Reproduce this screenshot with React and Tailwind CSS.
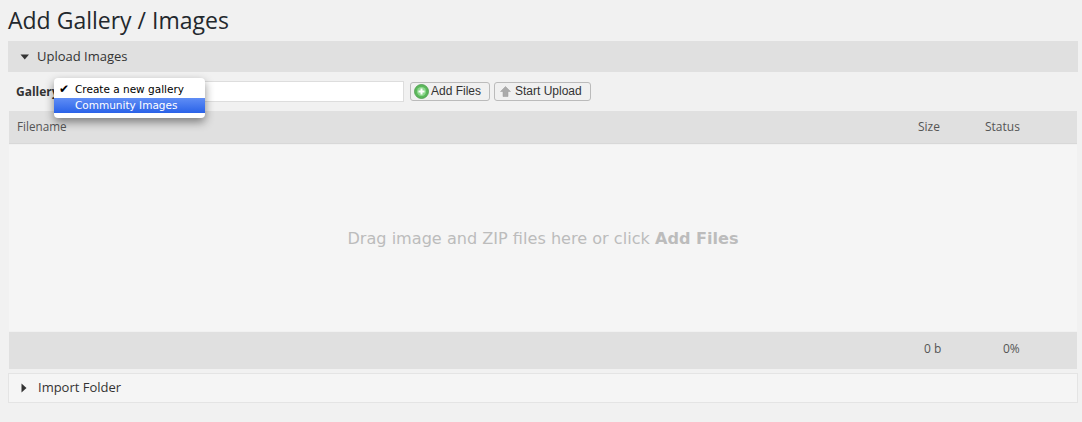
import React from "react";

const sans = "font-['Open_Sans',sans-serif]";
const lucida = "font-['DejaVu_Sans',sans-serif]";

const App = () => {
  return (
    <div className={`min-h-screen bg-[#f1f1f1] pl-2 pr-1 text-[#32373c] ${sans}`}>
      <h1 className="h-[41px] pt-[5px] text-[23px] leading-[31px] text-[#23282d]">
        Add Gallery / Images
      </h1>

      {/* UPLOAD PANEL */}
      <div className="flex h-[31px] items-center bg-[#e0e0e0] pl-3">
        <svg width="10" height="6" viewBox="0 0 10 6" className="mr-[7px]">
          <path d="M0.5 0.5h8.5L4.75 5.5z" fill="#333" />
        </svg>
        <span className="text-[13px] text-[#333]">Upload Images</span>
      </div>

      <div className="relative flex h-[39px] items-center pl-2">
        <span className="w-[46px] overflow-hidden whitespace-nowrap text-[12px] font-bold text-[#333]">
          Gallery
        </span>
        <input
          readOnly
          className="ml-[30px] h-[21px] w-[312px] border border-[#ddd] bg-white"
        />
        <button className="ml-[6px] flex h-[19px] w-[80px] items-center rounded-[3px] border border-[#bbb] bg-[#f0f0f0] pb-px pl-[3px] font-['Liberation_Sans',sans-serif] text-[12px] text-[#333]">
          <svg width="15" height="15" viewBox="0 0 15 15" className="mr-[2px] mt-px">
            <circle cx="7.5" cy="7.5" r="7" fill="#5cb85c" stroke="#4a9a4a" strokeWidth="0.8" />
            <circle cx="7.5" cy="7.5" r="4.5" fill="#8fd88f" />
            <path d="M7.5 4.5v6M4.5 7.5h6" stroke="#fff" strokeWidth="2" />
          </svg>
          Add Files
        </button>
        <button className="ml-[4px] flex h-[19px] w-[97px] items-center rounded-[3px] border border-[#bbb] bg-[#f0f0f0] pb-px pl-[5px] font-['Liberation_Sans',sans-serif] text-[12px] text-[#333]">
          <svg width="11" height="11" viewBox="0 0 11 11" className="mr-[4px] mt-px">
            <path d="M5.5 0.5L10.5 5.5H8V10.5H3V5.5H0.5z" fill="#aaa" stroke="#999" strokeWidth="0.5" />
          </svg>
          Start Upload
        </button>

        {/* open select menu */}
        <div className={`absolute left-[46px] top-[6px] z-10 h-[40px] w-[151px] rounded-[4px] bg-white pt-[3px] text-[10.5px] text-black shadow-[0_4px_10px_rgba(0,0,0,0.45)] ${lucida}`}>
          <div className="flex h-[17px] items-center pb-[2px] leading-[14px]">
            <span className="w-[21px] pl-[5px] text-[12px]">✔</span>
            Create a new gallery
          </div>
          <div className="flex h-[15px] items-center bg-gradient-to-b from-[#5f8df5] to-[#2a62e8] pl-[21px] text-white">
            Community Images
          </div>
        </div>
      </div>

      {/* FILE TABLE */}
      <div className="px-px">
        <div className="flex h-[33px] items-center border-b border-[#d8d8d8] bg-[#e0e0e0] pl-2 pr-[36px] text-[12px] text-[#555]">
          <span className="flex-1 text-[11.7px]">Filename</span>
          <span className="w-[67px]">Size</span>
          <span className="w-[56px]">Status</span>
        </div>
        <div className={`mt-px flex h-[186px] items-center justify-center bg-[#f5f5f5] pt-[2px] text-[#bcbcbc] ${lucida}`}>
          <span className="text-[16.1px]">
            Drag image and ZIP files here or click <b>Add Files</b>
          </span>
        </div>
        <div className="mt-px flex h-[37px] items-center justify-end bg-[#e0e0e0] pb-[3px] pr-[18px] text-[12px] text-[#555]">
          <span className="w-[79px]">0 b</span>
          <span className="w-[56px]">0%</span>
        </div>
      </div>

      {/* IMPORT PANEL */}
      <div className="mt-1 flex h-[30px] items-center border border-[#e4e4e4] bg-[#f5f5f5] pl-3">
        <svg width="6" height="10" viewBox="0 0 6 10" className="mr-[11px]">
          <path d="M0.5 0.5v9L5.5 5z" fill="#333" />
        </svg>
        <span className="text-[13px] text-[#333]">Import Folder</span>
      </div>
    </div>
  );
};

export default App;
